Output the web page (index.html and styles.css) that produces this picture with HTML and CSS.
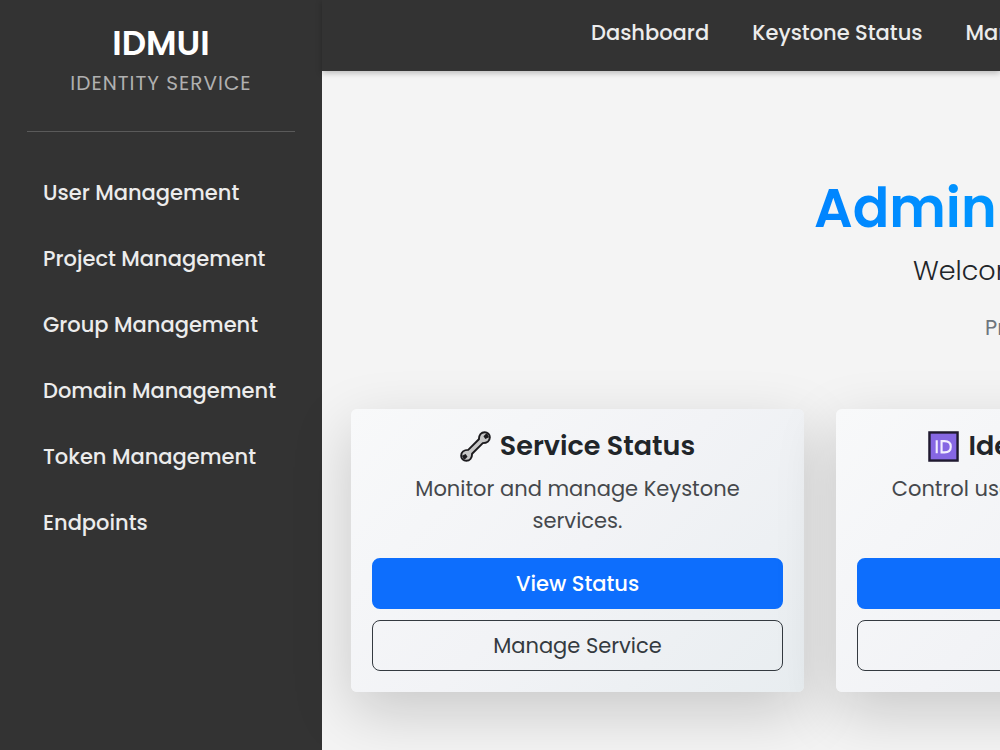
FILE: index.html
```html
<!DOCTYPE html>
<html lang="en">
<head>
<meta charset="utf-8">
<title>IDMUI</title>
<link rel="stylesheet" href="styles.css">
</head>
<body>
<div class="app">
  <aside class="sidebar">
    <div class="brand">
      <h2 class="brand-name">IDMUI</h2>
      <p class="brand-sub">IDENTITY SERVICE</p>
    </div>
    <nav class="side-nav">
      <a href="#">User Management</a>
      <a href="#">Project Management</a>
      <a href="#">Group Management</a>
      <a href="#">Domain Management</a>
      <a href="#">Token Management</a>
      <a href="#">Endpoints</a>
    </nav>
  </aside>
  <div class="page">
    <header class="topbar">
      <nav class="top-nav">
        <a href="#">Dashboard</a>
        <a href="#">Keystone Status</a>
        <a href="#">Manage</a>
      </nav>
    </header>
    <main class="content">
      <section class="intro">
        <h1 class="intro-title">Admin</h1>
        <p class="intro-lead">Welcome</p>
        <p class="intro-meta">Project</p>
      </section>
      <section class="cards">
        <article class="card">
          <h3 class="card-title">
            <svg class="icon" viewBox="0 0 32 32" aria-hidden="true">
              <path d="M19.500 8.500C19.500 4 22 1.200 25.500 1.200C28.500 1.200 30.800 3.500 30.800 6.500C30.800 10 28 12.500 23.500 12.500L12.500 23.500C12.500 28 10 30.800 6.500 30.800C3.500 30.800 1.200 28.500 1.200 25.500C1.200 22 4 19.500 8.500 19.500Z" fill="#c6c6c6" stroke="#1c1b1e" stroke-width="2"/>
              <path d="M28 3L25.500 5.500L26.500 7L29.500 5.500M4 29L6.500 26.500L5.500 25L2.500 26.500" fill="#1c1b1e" stroke="#1c1b1e" stroke-width="2"/>
            </svg>
            Service Status
          </h3>
          <p class="card-text">Monitor and manage Keystone services.</p>
          <button class="btn btn-primary" type="button">View Status</button>
          <button class="btn btn-outline" type="button">Manage Service</button>
        </article>
        <article class="card">
          <h3 class="card-title">
            <svg class="icon" viewBox="0 0 32 32" aria-hidden="true">
              <rect x="1.500" y="1.500" width="29" height="29" fill="#8667e3" stroke="#201a30" stroke-width="2.500"/>
              <path d="M9 9.500V23M14 10.500V22H17C21 22 23.500 20 23.500 16.200S21 10.500 17 10.500Z" fill="none" stroke="#f3efff" stroke-width="2.200"/>
            </svg>
            Identity Controls
          </h3>
          <p class="card-text">Control users, projects, and roles</p>
          <button class="btn btn-primary" type="button">Users</button>
          <button class="btn btn-outline" type="button">Projects</button>
        </article>
      </section>
    </main>
  </div>
</div>
</body>
</html>
```
FILE: styles.css
```css
* { box-sizing: border-box; }
body {
  margin: 0;
  background: #f4f4f4;
  color: #212529;
  font-family: Poppins, Inter, "Noto Sans", sans-serif;
  font-size: 21px;
  line-height: 32px;
}
h1, h2, h3, p { margin: 0; }
a { color: inherit; text-decoration: none; }

.app { display: flex; min-height: 100vh; overflow: hidden; }

.sidebar {
  flex: 0 0 322px;
  padding: 22px 27px;
  background: #333;
  color: #ececec;
}
.brand {
  padding-bottom: 32px;
  border-bottom: 1px solid #5a5a5a;
  text-align: center;
}
.brand-name { font-size: 34px; line-height: 42px; font-weight: 600; color: #fff; }
.brand-sub { margin-top: 3px; font-size: 20px; letter-spacing: 1px; color: #b0b0b0; }
.side-nav {
  display: flex;
  flex-direction: column;
  gap: 34px;
  padding: 45px 0 45px 16px;
  font-weight: 500;
  white-space: nowrap;
}

.page { flex: 1; min-width: 0; }
.topbar {
  padding: 17px 0 22px 269px;
  background: #333;
  color: #ececec;
  font-weight: 500;
  box-shadow: 0 2px 6px rgba(0, 0, 0, .25);
}
.top-nav { display: flex; gap: 43px; white-space: nowrap; }

.content { padding: 102px 29px 58px; }
.intro { padding-left: 463px; white-space: nowrap; }
.intro-title {
  width: max-content;
  font-size: 54px;
  line-height: 70px;
  font-weight: 600;
  background: linear-gradient(90deg, #0084ff, #0096ff);
  background-clip: text;
  color: transparent;
}
.intro-lead { padding: 8px 0 0 99px; font-size: 27px; line-height: 40px; font-weight: 300; }
.intro-meta { padding: 21px 0 0 171px; color: #6c757d; }

.cards {
  display: grid;
  grid-auto-flow: column;
  grid-auto-columns: minmax(453px, 1fr);
  gap: 32px;
  margin-top: 65px;
}
.card {
  display: flex;
  flex-direction: column;
  padding: 21px;
  border-radius: 6px;
  background: linear-gradient(135deg, #f8f9fa, #f2f3f6 50%, #e8edf0);
  box-shadow: 0 20px 60px rgba(0, 0, 0, .18);
  text-align: center;
}
.card-title {
  display: flex;
  align-items: center;
  justify-content: center;
  gap: 9px;
  font-size: 27px;
  font-weight: 600;
}
.icon { width: 31px; height: 31px; }
.card-text { margin: 11px 0 21px; padding: 0 24px; min-height: 64px; color: #45484c; }
.btn {
  height: 51px;
  border: 2px solid #0d6efd;
  border-radius: 8px;
  font: inherit;
}
.btn-primary { background: #0d6efd; color: #fff; font-weight: 500; }
.btn-outline { margin-top: 11px; border: 1px solid #343a40; background: transparent; color: #343a40; }
```
